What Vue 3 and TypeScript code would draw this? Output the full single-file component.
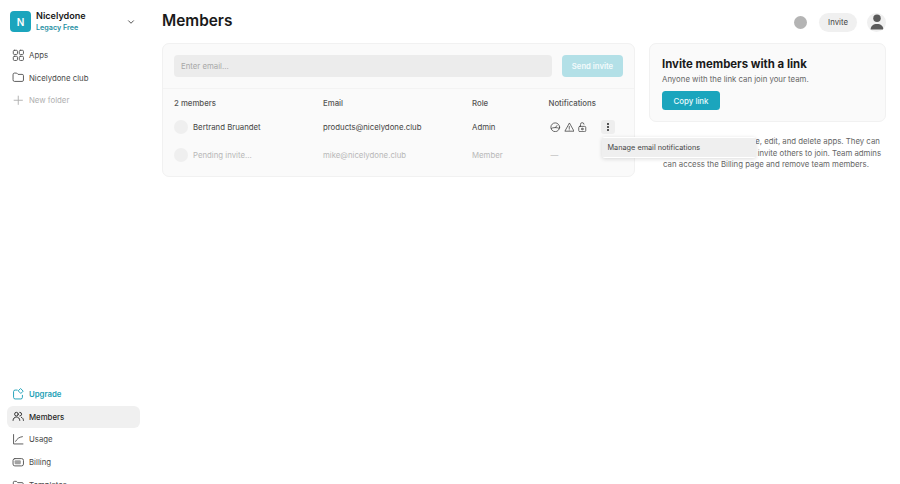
<script setup lang="ts">
interface NavItem { label: string; icon: string; cls?: string }
const topNav: NavItem[] = [
  { label: 'Apps', icon: 'apps' },
  { label: 'Nicelydone club', icon: 'folder' },
  { label: 'New folder', icon: 'plus', cls: 'muted' },
]
const bottomNav: NavItem[] = [
  { label: 'Upgrade', icon: 'upgrade', cls: 'teal' },
  { label: 'Members', icon: 'members', cls: 'active' },
  { label: 'Usage', icon: 'usage' },
  { label: 'Billing', icon: 'billing' },
  { label: 'Templates', icon: 'templates' },
]
const icons: Record<string, string> = {
  apps: '<rect x="2.500" y="2.500" width="8" height="8" rx="2"/><rect x="14" y="2.500" width="8" height="8" rx="2"/><rect x="2.500" y="14" width="8" height="8" rx="2"/><rect x="14" y="14" width="8" height="8" rx="2"/>',
  folder: '<path d="M2 6.500a2.500 2.500 0 0 1 2.500-2.500h4.500l2.500 2.500h8a2.500 2.500 0 0 1 2.500 2.500v8.500a2.500 2.500 0 0 1-2.500 2.500h-15a2.500 2.500 0 0 1-2.500-2.500z"/>',
  plus: '<path d="M12 4v16M4 12h16"/>',
  upgrade: '<path d="M10 4H6a3 3 0 0 0-3 3v11a3 3 0 0 0 3 3h11a3 3 0 0 0 3-3v-4"/><path d="M17 1.500l4.500 4.500-4.500 4.500-4.500-4.500z"/>',
  members: '<circle cx="8.500" cy="8" r="3.500"/><path d="M2 20c0-4 3-6.500 6.500-6.500S15 16 15 20"/><path d="M15 4.500a3.500 3.500 0 0 1 0 7M18 14c2.400.8 4 3 4 6"/>',
  usage: '<path d="M3 3v18h18"/><path d="M7 16c3-5 6-8 13-9"/>',
  billing: '<rect x="2" y="5" width="20" height="14" rx="3.500"/><rect x="5" y="8" width="12" height="8" rx="2" fill="currentColor" fill-opacity="0.55" stroke="none"/>',
  templates: '<path d="M2.500 6.500a2 2 0 0 1 2-2h4l2.500 2.500h8.500a2 2 0 0 1 2 2v9a2 2 0 0 1-2 2h-15a2 2 0 0 1-2-2z"/><path d="M12 12h9"/>',
}
</script>

<template>
  <div class="page">
    <aside class="sidebar">
      <div class="upper">
        <div class="brand">
          <div class="logo">N</div>
          <div class="brand-text">
            <div class="brand-name">Nicelydone</div>
            <div class="brand-plan">Legacy Free</div>
          </div>
          <svg class="chev" viewBox="0 0 24 24" fill="none" stroke="currentColor" stroke-width="2.400" stroke-linecap="round" stroke-linejoin="round"><path d="M6 9l6 6 6-6"/></svg>
        </div>
        <nav class="nav">
          <div v-for="n in topNav" :key="n.label" class="nav-item" :class="n.cls">
            <svg class="nav-icon" viewBox="0 0 24 24" fill="none" stroke="currentColor" stroke-width="1.800" stroke-linecap="round" stroke-linejoin="round" v-html="icons[n.icon]"></svg>
            <span>{{ n.label }}</span>
          </div>
        </nav>
      </div>
      <nav class="nav">
        <div v-for="n in bottomNav" :key="n.label" class="nav-item" :class="n.cls">
          <svg class="nav-icon" viewBox="0 0 24 24" fill="none" stroke="currentColor" stroke-width="1.800" stroke-linecap="round" stroke-linejoin="round" v-html="icons[n.icon]"></svg>
          <span>{{ n.label }}</span>
        </div>
      </nav>
    </aside>

    <main class="main">
      <header class="top">
        <h1>Members</h1>
        <div class="top-actions">
          <span class="dot"></span>
          <button class="invite">Invite</button>
          <span class="avatar">
            <svg viewBox="0 0 24 24" width="18" height="18" fill="#5a5a5a"><circle cx="12" cy="7" r="5"/><path d="M3.500 22c0-5 3.500-7.500 8.500-7.500s8.500 2.500 8.500 7.500z"/></svg>
          </span>
        </div>
      </header>

      <div class="columns">
        <section class="card members">
          <div class="invite-row">
            <div class="email-input">Enter email...</div>
            <button class="send">Send invite</button>
          </div>
          <div class="table">
            <div class="row head">
              <div>2 members</div><div>Email</div><div>Role</div><div>Notifications</div>
            </div>
            <div class="row body">
              <div class="who"><span class="face"></span>Bertrand Bruandet</div>
              <div>products@nicelydone.club</div>
              <div>Admin</div>
              <div class="notes">
                <svg viewBox="0 0 24 24" fill="none" stroke="currentColor" stroke-width="1.800" stroke-linecap="round" stroke-linejoin="round"><circle cx="12" cy="12" r="10"/><path d="M3 14.500c3-2.500 15-2.500 18 0M12 13l4-5"/></svg>
                <svg viewBox="0 0 24 24" fill="none" stroke="currentColor" stroke-width="1.800" stroke-linecap="round" stroke-linejoin="round"><path d="M12 3L2 21h20z"/><path d="M12 10v5M12 18v.200"/></svg>
                <svg viewBox="0 0 24 24" fill="none" stroke="currentColor" stroke-width="1.800" stroke-linecap="round" stroke-linejoin="round"><rect x="4" y="10" width="16" height="12" rx="2.500"/><path d="M8 10V6a4 4 0 0 1 8-1"/><circle cx="12" cy="16" r="2"/></svg>
                <span class="kebab"><i></i><i></i><i></i></span>
              </div>
            </div>
            <div class="row body pending">
              <div class="who"><span class="face"></span>Pending invite...</div>
              <div>mike@nicelydone.club</div>
              <div>Member</div>
              <div class="dash">—</div>
            </div>
          </div>
          <div class="menu"><div class="menu-item">Manage email notifications</div></div>
        </section>

        <div class="side">
          <section class="card link-card">
            <h2>Invite members with a link</h2>
            <p>Anyone with the link can join your team.</p>
            <button class="copy">Copy link</button>
          </section>
          <p class="note">All team members can create, edit, and delete apps. They can<br>view and share all apps, and invite others to join. Team admins<br>can access the Billing page and remove team members.</p>
        </div>
      </div>
    </main>
  </div>
</template>

<style>
html, body { margin: 0; background: #fff; }
</style>

<style scoped>
.page {
  display: flex;
  height: 484px;
  overflow: hidden;
  background: #fff;
  color: #1a1a1a;
  font-family: Inter, "Liberation Sans", sans-serif;
  font-size: 7.800px;
}
.sidebar { flex: 0 0 148px; box-sizing: border-box; padding: 0 8px 0 7px; }
.upper { height: 383px; }
.brand { display: flex; align-items: center; height: 44px; box-sizing: border-box; padding: 0 4px 1px 3px; }
.logo {
  width: 21px; height: 21px; border-radius: 4px; background: #1ba5bd; color: #fff;
  display: flex; align-items: center; justify-content: center; font-size: 10px; font-weight: 600;
}
.brand-text { margin-left: 5px; }
.brand-name { font-size: 9.100px; font-weight: 600; line-height: 12px; color: #1a1a1a; }
.brand-plan { font-size: 7.200px; font-weight: 600; line-height: 11px; color: #1f8fa3; }
.chev { width: 10px; height: 10px; margin-left: auto; color: #555; }
.nav { display: flex; flex-direction: column; gap: 0.700px; }
.nav-item {
  display: flex; align-items: center; gap: 4.500px; height: 22px; padding: 0 5px; border-radius: 6px;
  font-size: 7.800px; color: #4a4a4a; font-weight: 400;
}
.nav-icon { width: 12.500px; height: 12.500px; flex: none; color: #555; }
.muted, .muted .nav-icon { color: #b0b0b0; }
.teal, .teal .nav-icon { color: #1b9fb6; font-weight: 600; }
.active { background: #f0f0f0; color: #1f1f1f; font-weight: 500; }
.active .nav-icon { color: #2a2a2a; }
.active span { position: relative; top: 0.500px; }

.main { flex: 1; padding: 0 14px 0 14px; min-width: 0; }
.top { display: flex; align-items: center; justify-content: space-between; height: 43px; box-sizing: border-box; padding-top: 1px; }
h1 { margin: 0; font-size: 15.400px; font-weight: 600; color: #1a1a1a; position: relative; top: -2px; }
.top-actions { display: flex; align-items: center; gap: 12px; }
.dot { width: 13px; height: 13px; border-radius: 50%; background: #b4b4b4; }
.invite {
  height: 19px; width: 38px; padding: 0; border: 0; border-radius: 10px; background: #f0f0f0; color: #444;
  font: 400 7.800px Inter, sans-serif; margin-right: -2px;
}
.avatar {
  width: 19px; height: 19px; border-radius: 50%; background: #f0f0f0; display: flex; align-items: center;
  justify-content: center; overflow: hidden;
}
.columns { display: flex; gap: 14px; align-items: flex-start; }
.card { box-sizing: border-box; background: #fafafa; border: 1px solid #f1f1f1; border-radius: 7px; }
.members { position: relative; width: 473px; height: 134px; flex: none; }
.invite-row { display: flex; gap: 10px; padding: 11px; height: 45px; box-sizing: border-box; border-bottom: 1px solid #f3f3f3; }
.email-input {
  flex: 1; height: 22px; background: #ececec; border-radius: 4px; padding-left: 7px; color: #a8a8a8;
  font-size: 7.800px; line-height: 22px;
}
.send {
  width: 61px; height: 22px; padding: 0; border: 0; border-radius: 4px; background: #b3e0e7; color: #f4fbfc;
  font: 600 7.700px Inter, sans-serif;
}
.table { padding: 0 11px; }
.row { display: grid; grid-template-columns: 149px 149px 76.500px 1fr; align-items: center; }
.head { height: 24px; box-sizing: border-box; padding-top: 4px; font-weight: 500; color: #555; }
.body { height: 28px; color: #444; font-weight: 400; }
.pending { color: #b8b8b8; font-weight: 400; }
.who { display: flex; align-items: center; gap: 5px; }
.face { width: 14px; height: 14px; border-radius: 50%; background: #efefef; }
.notes { display: flex; align-items: center; gap: 2.500px; color: #444; }
.notes svg { width: 10.500px; height: 10.500px; margin-left: 0.500px; }
.notes svg:first-child { margin-left: 1.500px; }
.kebab {
  width: 14px; height: 14px; margin-left: 10.500px; border-radius: 3px; background: #eeeeee; display: flex;
  flex-direction: column; align-items: center; justify-content: center; gap: 1px;
}
.kebab i { width: 2px; height: 2px; border-radius: 50%; background: #222; }
.dash { color: #bbb; padding-left: 2px; }
.menu {
  position: absolute; left: 438.500px; top: 93px; width: 154px; padding: 1px 0; background: #fff;
  border-radius: 3px; box-shadow: 0 1px 4px rgba(0, 0, 0, 0.14); z-index: 2;
}
.menu-item { height: 19px; line-height: 19px; background: #efefef; padding-left: 6px; font-size: 7.300px; color: #444; font-weight: 400; }
.side { width: 237px; flex: none; }
.link-card { height: 79px; padding: 13px 12px; }
h2 { margin: 0; font-size: 11.400px; font-weight: 700; line-height: 15px; color: #1a1a1a; }
.link-card p { margin: 2px 0 6px; font-size: 7.800px; line-height: 11px; color: #666; }
.copy {
  width: 58px; height: 19px; padding: 0; border: 0; border-radius: 3.500px; background: #1ba5bd; color: #eafafc;
  font: 500 7.900px Inter, sans-serif; display: block;
}
.note { margin: 14px 0 0; text-align: center; font-size: 7.800px; line-height: 11.700px; color: #666; white-space: nowrap; padding-right: 3px; }
</style>
